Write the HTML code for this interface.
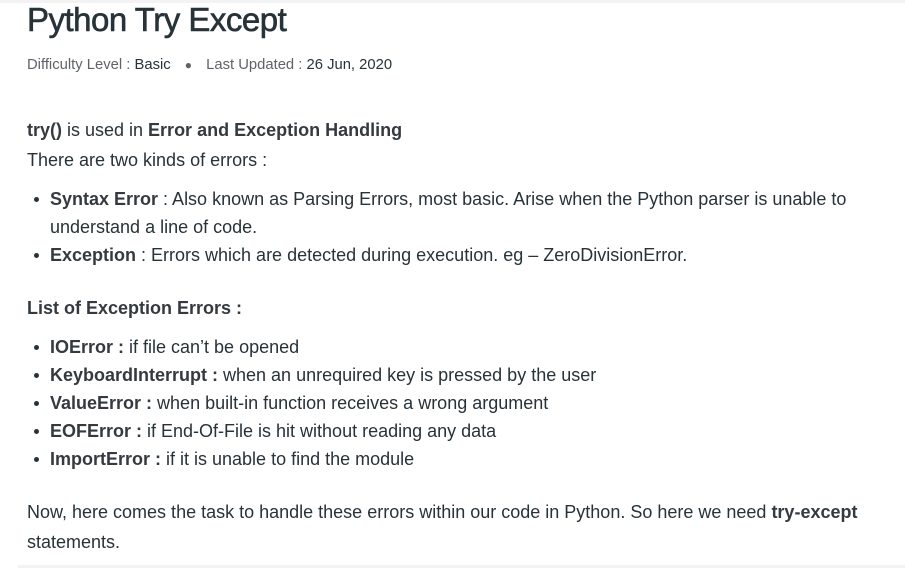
<!DOCTYPE html>
<html><head><meta charset="utf-8"><style>
body{margin:0;width:905px;height:568px;background:#fff;position:relative;overflow:hidden;font-family:"Liberation Sans",sans-serif;color:#273239}
.t{position:absolute;left:27px;white-space:nowrap;font-size:18px;line-height:20px}
b{font-weight:bold;color:#343a40}
.li{left:50px}
.li:before{content:"";position:absolute;left:-16px;top:8px;width:5px;height:5px;border-radius:50%;background:#273239}
</style></head><body>
<div style="position:absolute;left:0;top:0;width:905px;height:3px;background:#f3f3f3"></div>
<div class="t" style="top:1px;font-size:33px;line-height:38px;letter-spacing:-0.5px;color:#273239;-webkit-text-stroke:0.6px #273239">Python Try Except</div>
<div class="t" style="top:55px;font-size:14.8px;color:#5f6368">Difficulty Level : <span style="color:#273239">Basic</span> <span style="margin:0 10px;font-size:12px">●</span> Last Updated : <span style="color:#273239">26 Jun, 2020</span></div>
<div class="t" style="top:120px"><b>try()</b> is used in <b>Error and Exception Handling</b></div>
<div class="t" style="top:150px">There are two kinds of errors :</div>
<div class="t li" style="top:189px"><b>Syntax Error</b> : Also known as Parsing Errors, most basic. Arise when the Python parser is unable to</div>
<div class="t" style="top:217px;left:50px">understand a line of code.</div>
<div class="t li" style="top:245px"><b>Exception</b> : Errors which are detected during execution. eg – ZeroDivisionError.</div>
<div class="t" style="top:298px"><b>List of Exception Errors :</b></div>
<div class="t li" style="top:337px"><b>IOError :</b> if file can’t be opened</div>
<div class="t li" style="top:365px"><b>KeyboardInterrupt :</b> when an unrequired key is pressed by the user</div>
<div class="t li" style="top:393px"><b>ValueError :</b> when built-in function receives a wrong argument</div>
<div class="t li" style="top:421px"><b>EOFError :</b> if End-Of-File is hit without reading any data</div>
<div class="t li" style="top:449px"><b>ImportError :</b> if it is unable to find the module</div>
<div class="t" style="top:502px">Now, here comes the task to handle these errors within our code in Python. So here we need <b>try-except</b></div>
<div class="t" style="top:532px">statements.</div>
<div style="position:absolute;left:18px;top:565px;width:887px;height:3px;background:#f3f3f3"></div>
</body></html>
